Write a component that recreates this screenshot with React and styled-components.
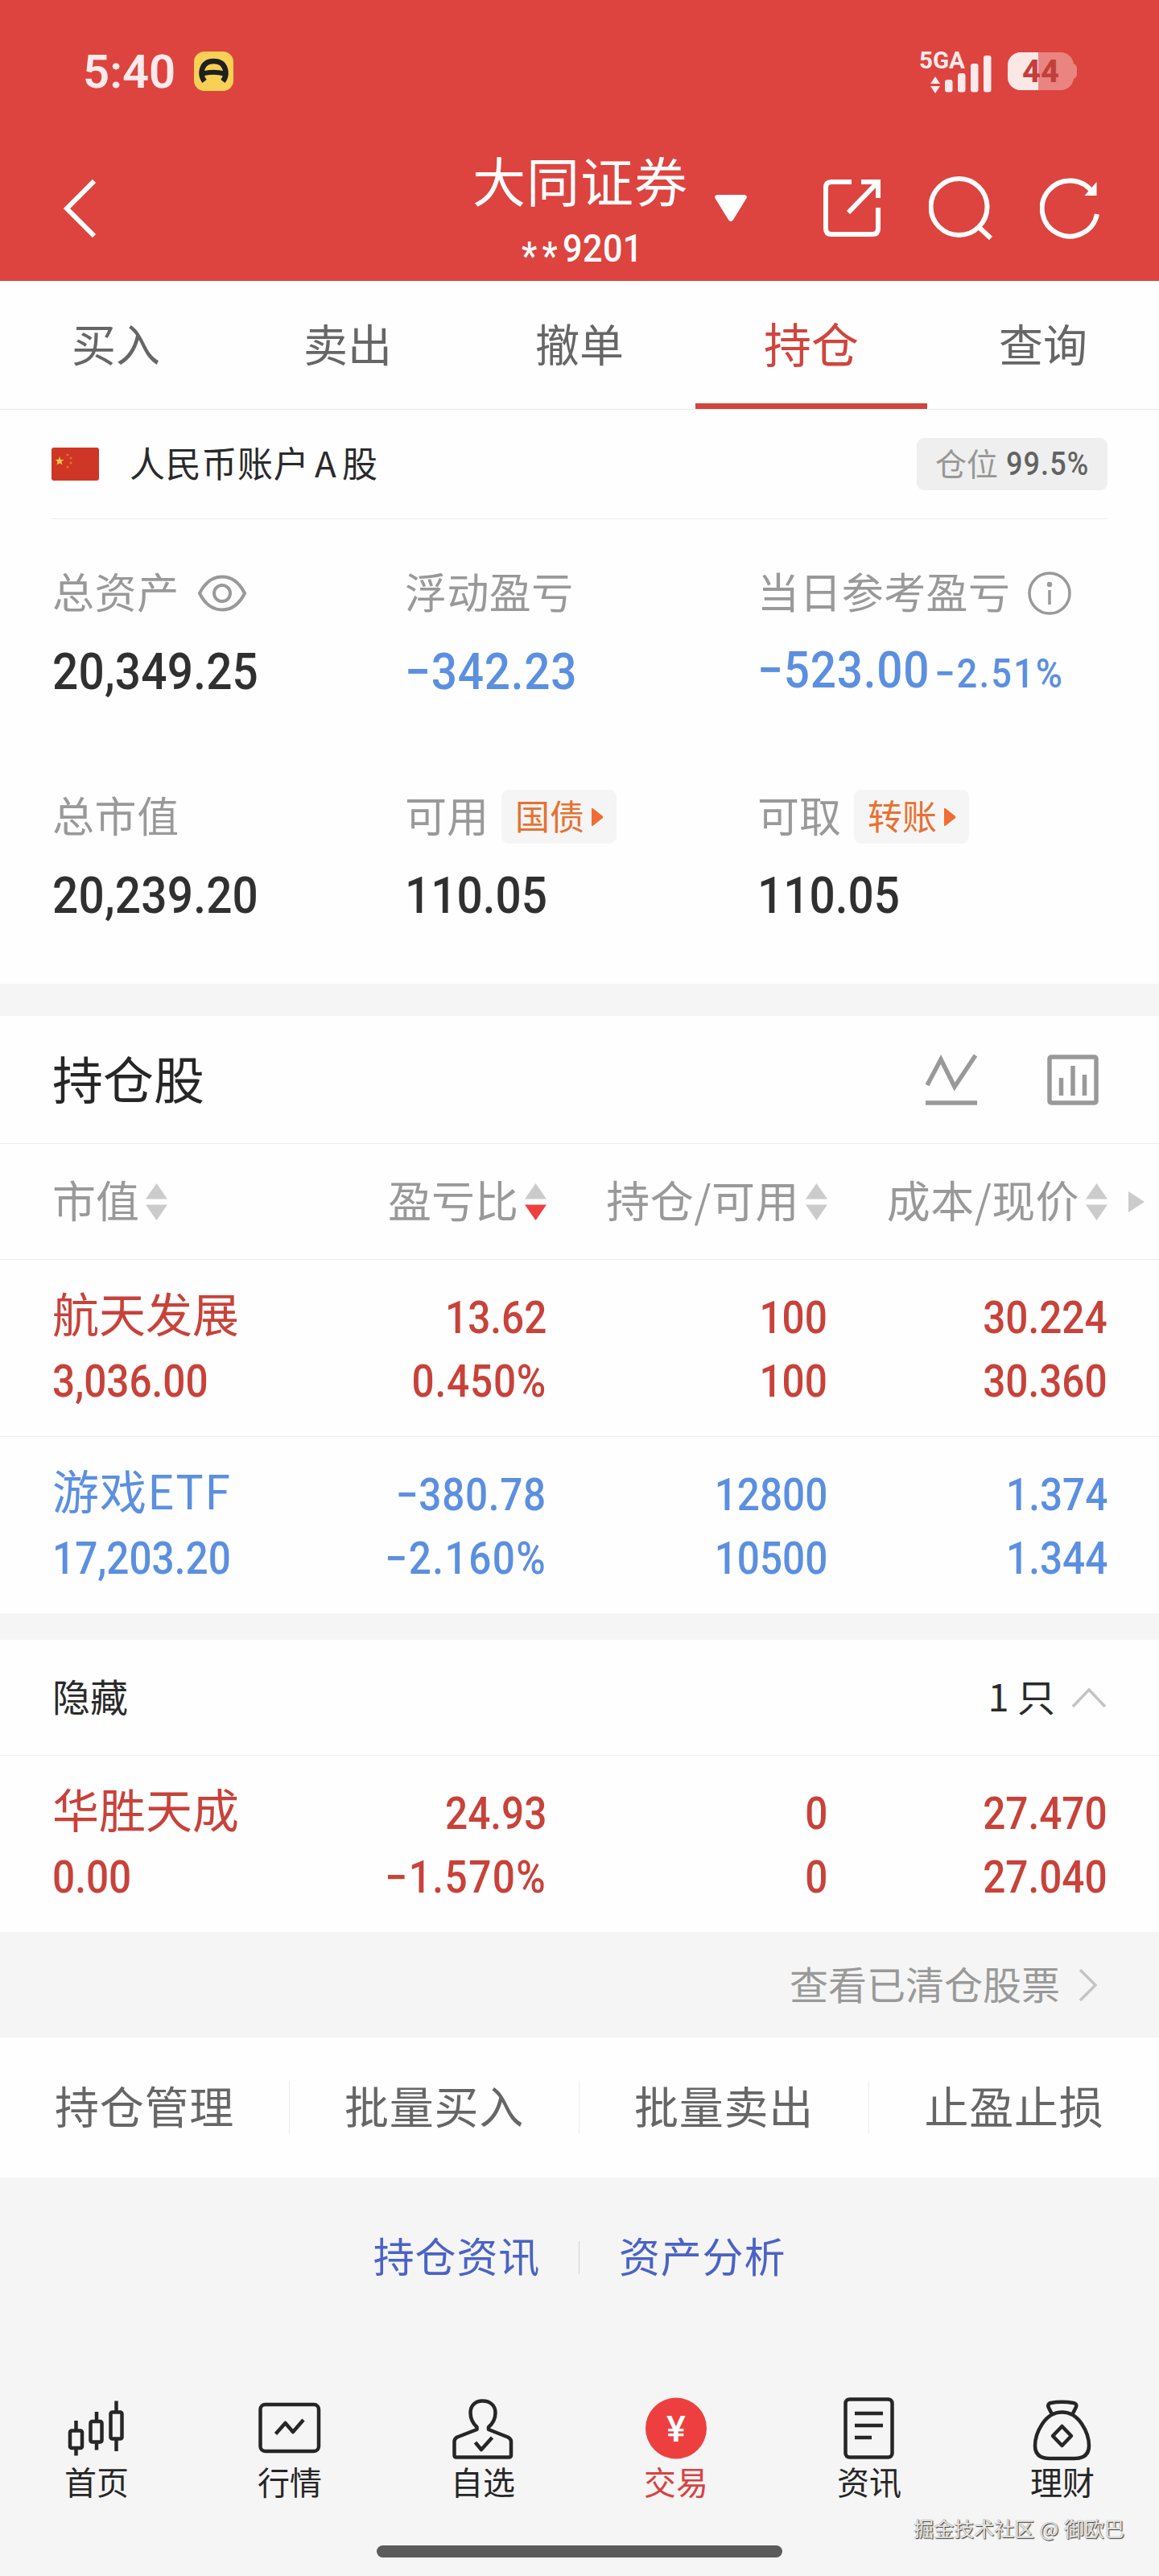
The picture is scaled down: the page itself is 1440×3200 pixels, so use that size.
import React from "react";
import styled, { createGlobalStyle } from "styled-components";

const RED = "#c8423a";
const BLUE = "#5b8fe0";

const GlobalStyle = createGlobalStyle`
  * { box-sizing: border-box; }
  body {
    margin: 0;
    background: #f5f5f5;
    font-family: "Noto Sans CJK SC", sans-serif;
  }
  svg { display: block; flex: none; }
`;

const Page = styled.div`
  width: 1440px;
  height: 3200px;
  overflow: hidden;
  background: #f5f5f5;
`;

// the bottom padding centres the ideographs in their own box
const Text = styled.span`
  font-size: ${(p) => p.$size}px;
  line-height: 1;
  padding-bottom: 0.11em;
  letter-spacing: ${(p) => p.$space || 0}px;
  color: ${(p) => p.$color || "#2a2a2a"};
  white-space: nowrap;
`;
const Num = styled.span`
  display: inline-block;
  font-family: Roboto, sans-serif;
  font-size: ${(p) => p.$size}px;
  font-weight: 500;
  line-height: 1;
  letter-spacing: ${(p) => p.$space || 0}em;
  color: ${(p) => p.$color || "#303030"};
  white-space: nowrap;
  transform: scaleX(0.9);
  transform-origin: ${(p) => p.$origin || "left"} center;
`;

const Header = styled.header`
  height: 349px;
  background: #dd443f;
`;
const StatusBar = styled.div`
  height: 177px;
  padding: 0 102px 0 103px;
  display: flex;
  align-items: center;
`;
const Clock = styled.span`
  font: 600 58px/1 Roboto, sans-serif;
  color: #fdeaea;
`;
const AppBadge = styled.svg`
  margin-left: 23px;
`;
const Signal = styled.svg`
  margin-left: auto;
  margin-right: 20px;
`;
const TitleBar = styled.div`
  height: 172px;
  display: grid;
  grid-template-columns: 586px 270px 166px 1fr;
`;
const Back = styled.svg`
  margin: 46px 0 0 78px;
`;
const TitleBlock = styled.div`
  display: flex;
  flex-direction: column;
  align-items: center;
  padding-top: 12px;
`;
const Account = styled.div`
  margin-top: 23px;
  width: 147px;
  display: flex;
`;
const Stars = styled.span`
  line-height: 0;
  vertical-align: -9px;
  letter-spacing: 7px;
`;
const Caret = styled.svg`
  margin: 65px 0 0 32px;
`;
const HeaderIcons = styled.div`
  display: flex;
  gap: 56px;
  padding-top: 40px;
`;

const Tabs = styled.nav`
  height: 160px;
  display: grid;
  grid-template-columns: repeat(5, 1fr);
  background: #fefefe;
  border-bottom: 1px solid #ebebeb;
`;
const Tab = styled.div`
  display: flex;
  justify-content: center;
  align-items: center;
  border-bottom: 7px solid ${(p) => (p.$active ? "#d0453d" : "transparent")};
  padding-top: 7px;
`;

const Panel = styled.section`
  background: #fefefe;
  margin-bottom: ${(p) => p.$gap || 0}px;
`;
const AccountRow = styled.div`
  height: 136px;
  margin: 0 64px;
  border-bottom: 1px solid #ebebeb;
  display: flex;
  align-items: center;
`;
const AccountName = styled.div`
  margin-left: 38px;
  display: flex;
  word-spacing: -4px;
`;
const Position = styled.div`
  margin-left: auto;
  width: 237px;
  height: 65px;
  border-radius: 9px;
  background: #efefef;
  padding-left: 23px;
  display: flex;
  align-items: center;
  gap: 10px;
`;
const Summary = styled.div`
  height: 577px;
  padding: 43px 0 0 65px;
  display: grid;
  grid-template-columns: 438px 438px 1fr;
  grid-template-rows: 278px 1fr;
`;
const Metric = styled.div``;
const MetricLabel = styled.div`
  height: 97px;
  display: flex;
  align-items: center;
`;
const MetricValue = styled.div`
  height: 97px;
  padding-top: 2px;
  display: flex;
  align-items: center;
`;
const MetricIcon = styled.svg`
  margin-left: 22px;
`;
const DayProfit = styled(MetricValue)`
  height: 90px;
  align-items: baseline;
  padding-top: 16px;
`;
const Tag = styled.div`
  height: 67px;
  width: 143px;
  margin-left: ${(p) => p.$left}px;
  padding-left: 17px;
  border-radius: 9px;
  background: #f5f5f5;
  display: flex;
  align-items: center;
  gap: 8px;
`;

const SectionHead = styled.div`
  height: 159px;
  padding: 0 75px 0 65px;
  border-bottom: 1px solid #ebebeb;
  display: flex;
  align-items: center;
`;
const HeadIcons = styled.div`
  margin-left: auto;
  padding-top: 1px;
  display: flex;
  gap: 86px;
`;
const columns = "266px 348px 349px 348px 1fr";
const ColumnHead = styled.div`
  height: 144px;
  padding: 1px 0 0 65px;
  border-bottom: 1px solid #ededed;
  display: grid;
  grid-template-columns: ${columns};
  align-items: center;
`;
const ColumnLabel = styled.div`
  display: flex;
  align-items: center;
  justify-content: ${(p) => (p.$first ? "flex-start" : "flex-end")};
`;
const Sorter = styled.svg`
  margin-left: 8px;
`;
const More = styled.svg`
  margin-left: 26px;
`;
const StockRow = styled.div`
  height: ${(p) => (p.$last ? 219 : 220)}px;
  padding: 33px 0 0 65px;
  border-bottom: ${(p) => (p.$last ? "none" : "1px solid #ededed")};
  display: grid;
  grid-template-columns: ${columns};
  align-items: start;
`;
const Cell = styled.div`
  display: grid;
  grid-auto-rows: 79px;
  align-items: center;
  justify-items: ${(p) => (p.$first ? "start" : "end")};
`;
const StockName = styled(Text)`
  margin-top: -9px;
`;

const FoldRow = styled.div`
  height: 144px;
  padding: 0 65px;
  border-bottom: 1px solid #ededed;
  display: flex;
  align-items: center;
`;
const FoldCount = styled.div`
  margin-left: auto;
  display: flex;
  align-items: center;
`;
const FoldIcon = styled.svg`
  margin-left: 20px;
`;
const ClearedLink = styled.div`
  height: 131px;
  padding-right: 75px;
  display: flex;
  align-items: center;
  justify-content: flex-end;
  gap: 22px;
`;
const Actions = styled.div`
  height: 174px;
  background: #fefefe;
  display: grid;
  grid-template-columns: repeat(4, 1fr);
  align-items: center;
`;
const Action = styled.div`
  height: 66px;
  display: flex;
  align-items: center;
  justify-content: center;
  border-right: 1px solid #ececec;
  &:last-child {
    border-right: none;
  }
`;
const Links = styled.div`
  height: 199px;
  display: flex;
  align-items: center;
  justify-content: center;
`;
const LinkDivider = styled.div`
  width: 1px;
  height: 41px;
  margin: 0 49px 0 48px;
  background: #d2d2d2;
`;
const BottomNav = styled.nav`
  height: 207px;
  padding-top: 70px;
  display: grid;
  grid-template-columns: repeat(6, 1fr);
`;
const NavItem = styled.div`
  display: flex;
  flex-direction: column;
  align-items: center;
  gap: 4px;
`;
const Watermark = styled.div`
  height: 51px;
  padding: 17px 43px 0 0;
  font-size: 25px;
  line-height: 1;
  text-align: right;
  word-spacing: 1px;
  color: #e6e6e6;
  text-shadow: 1px 1px 1px #333, 0 0 1px #777;
`;
const HomeBar = styled.div`
  width: 504px;
  height: 15px;
  margin: 0 auto;
  border-radius: 8px;
  background: #5b5b5b;
`;

const SortIcon = ({ down }) => (
  <Sorter width="27" height="46" viewBox="0 0 27 46">
    <path d="M13.5 0L27 19.5H0z" fill="#cbcbcb" />
    <path d="M0 26.5H27L13.5 46z" fill={down ? "#ee3f40" : "#cbcbcb"} />
  </Sorter>
);

const TagArrow = () => (
  <svg width="16" height="24" viewBox="0 0 16 24">
    <path d="M1 2Q1 0 3 1.5L14.5 10.5Q16 12 14.5 13.5L3 22.5Q1 24 1 22z" fill="#ef6d31" />
  </svg>
);

// signs and percents need a little more air than plain digits
const Amount = ({ size = 55, children, ...rest }) => (
  <Num
    $size={size}
    $space={(children.includes("−") ? 0.014 : 0) + (children.includes("%") ? 0.016 : 0)}
    {...rest}
  >
    {children}
  </Num>
);

const stocks = [
  {
    name: "航天发展",
    value: "3,036.00",
    color: RED,
    cells: [["13.62", "0.450%"], ["100", "100"], ["30.224", "30.360"]],
  },
  {
    name: "游戏ETF",
    space: 1,
    value: "17,203.20",
    color: BLUE,
    cells: [["−380.78", "−2.160%"], ["12800", "10500"], ["1.374", "1.344"]],
  },
];

const hidden = {
  name: "华胜天成",
  value: "0.00",
  color: RED,
  cells: [["24.93", "−1.570%"], ["0", "0"], ["27.470", "27.040"]],
};

const Stock = ({ stock, last }) => (
  <StockRow $last={last}>
    <Cell $first>
      <StockName $size={58} $space={stock.space} $color={stock.color}>{stock.name}</StockName>
      <Amount $color={stock.color}>{stock.value}</Amount>
    </Cell>
    {stock.cells.map(([top, bottom], i) => (
      <Cell key={`${stock.name}-${i}`}>
        <Amount $origin="right" $color={stock.color}>{top}</Amount>
        <Amount $origin="right" $color={stock.color}>{bottom}</Amount>
      </Cell>
    ))}
  </StockRow>
);

// 80x84 drawings of the bottom navigation
const navItems = [
  {
    label: "首页",
    icon: (
      <>
        <rect x="7" y="45.5" width="15" height="21.5" rx="2" />
        <path d="M14.5 33v12M14.5 67v9.5M40 22v12M40 60v9.5M64.5 8.5v13M64.5 57v14" />
        <rect x="32.5" y="34" width="14" height="25.5" rx="2" />
        <rect x="57.5" y="22.5" width="14" height="33" rx="2" />
      </>
    ),
  },
  {
    label: "行情",
    icon: (
      <>
        <rect x="3.5" y="13" width="72.5" height="58" rx="6" />
        <path d="M22.5 49.5L34.5 36L44 47L57 32" />
      </>
    ),
  },
  {
    label: "自选",
    icon: (
      <>
        <path d="M32.5 44V41C27 36 24.5 30 24.5 23C24.5 14 31 8.5 39.5 8.5C48.5 8.5 55.5 14 55.5 23C55.5 30 53 36 47 41V44L71 53.5Q75 55.5 75 59V76Q75 78.5 72 78.5H7Q4.5 78.5 4.5 76V59Q4.5 55.5 8 53.5Z" />
        <path d="M30.5 60L38 69L51.5 54" />
      </>
    ),
  },
  {
    label: "交易",
    active: true,
    icon: (
      <>
        <circle cx="40" cy="42.5" r="38" fill="#ee3f40" stroke="none" />
        <text x="40" y="59" textAnchor="middle" fontFamily="Roboto, sans-serif" fontSize="45" fontWeight="500" fill="#fff" stroke="none">¥</text>
      </>
    ),
  },
  {
    label: "资讯",
    icon: (
      <>
        <rect x="10.5" y="6.5" width="58" height="72" rx="5" />
        <path d="M22 24H57M22 39H57M22 54H43" />
      </>
    ),
  },
  {
    label: "理财",
    icon: (
      <>
        <path d="M27 25L22.5 16Q21.5 12 25.5 11Q39 8.5 53.5 11Q58.5 12 57 16L52.5 25" />
        <path d="M39.5 22.5C51 22.5 58 28 64 37C70 46 73 56 73 64C73 76 65 80 55 80H24C14 80 6 76 6 64C6 56 9 46 15 37C21 28 28 22.5 39.5 22.5Z" />
        <path d="M39.5 40L51 52L39.5 64L28 52Z" />
      </>
    ),
  },
];

const TopHeader = () => (
  <Header>
    <StatusBar>
      <Clock>5:40</Clock>
      <AppBadge width="49" height="49" viewBox="0 0 49 49">
        <rect width="49" height="49" rx="13" fill="#f8d055" />
        <path d="M13 37C7 29 8 12 24.5 12C41 12 42 29 36 37" fill="none" stroke="#1d211f" strokeWidth="6.5" />
        <path d="M11 27.5Q24.5 24 38 27.5" fill="none" stroke="#1d211f" strokeWidth="6" />
      </AppBadge>
      <Signal width="96" height="82" viewBox="-4 -14 96 82">
        <text x="2" y="23" fontFamily="Roboto, sans-serif" fontSize="30" fontWeight="700" fill="#fdeaea" textLength="57" lengthAdjust="spacingAndGlyphs">5GA</text>
        <g fill="#fdeaea">
          <path d="M16 42L22 33L28 42zM16 45H28L22 54z" />
          <rect x="34" y="37" width="9.5" height="15.5" rx="3" />
          <rect x="50" y="29" width="9.5" height="23.5" rx="3" />
          <rect x="66" y="17" width="9.5" height="35.5" rx="3" />
          <rect x="82" y="7" width="9.5" height="45.5" rx="3" />
        </g>
      </Signal>
      <svg width="86" height="47" viewBox="0 0 86 47">
        <rect width="82" height="47" rx="16" fill="#ea8480" />
        <path d="M81 14Q86 15 86 20V27Q86 32 81 33z" fill="#ea8480" />
        <path d="M38 0H16A16 16 0 0 0 0 16V31A16 16 0 0 0 16 47H38z" fill="#fbe8e6" />
        <text x="18" y="37" fontFamily="Roboto, sans-serif" fontSize="38" fontWeight="800" fill="#c23f3b" textLength="46" lengthAdjust="spacingAndGlyphs">44</text>
      </svg>
    </StatusBar>
    <TitleBar>
      <Back width="44" height="72" viewBox="0 0 44 72" fill="none" stroke="#fff" strokeWidth="6">
        <path d="M39 2L5 36L39 70" />
      </Back>
      <TitleBlock>
        <Text $size={66} $space={1} $color="#fff">大同证券</Text>
        <Account>
          <Num $size={48} $space={0.01} $color="#fff">
            <Stars>**</Stars>9201
          </Num>
        </Account>
      </TitleBlock>
      <Caret width="40" height="34" viewBox="0 0 40 34">
        <path d="M3 0H37Q41.5 1 39 5L23 31Q20 35 17 31L1 5Q-1.5 1 3 0z" fill="#fff" />
      </Caret>
      <HeaderIcons>
        <svg width="76" height="82" viewBox="0 0 76 82" fill="none" stroke="#fff" strokeWidth="6">
          <path d="M36 9H11Q4 9 4 16V67Q4 74 11 74H62Q69 74 69 67V41" />
          <path d="M48 9H69V29M68 10L32 47" />
        </svg>
        <svg width="82" height="82" viewBox="0 0 82 82" fill="none" stroke="#fff" strokeWidth="6">
          <circle cx="37.5" cy="40" r="35" />
          <path d="M62 65L77 79" />
        </svg>
        <svg width="76" height="82" viewBox="0 0 76 82" fill="none" stroke="#fff" strokeWidth="6">
          <path d="M66 23A34.5 34.5 0 1 0 71 49" />
          <path d="M70.5 9V26H55.5z" fill="#fff" stroke="none" />
        </svg>
      </HeaderIcons>
    </TitleBar>
  </Header>
);

const AccountPanel = () => (
  <Panel $gap={40}>
    <AccountRow>
      <svg width="59" height="41" viewBox="0 0 59 41">
        <rect width="59" height="41" rx="3" fill="#cf3625" />
        <path d="M10 11l1.5 4h4l-3.2 2.6 1.2 4-3.5-2.4-3.5 2.4 1.2-4L4.5 15h4z" fill="#f6c945" />
        <g fill="#e2702c">
          <circle cx="20" cy="9" r="1.6" />
          <circle cx="24" cy="13" r="1.6" />
          <circle cx="24" cy="19" r="1.6" />
          <circle cx="20" cy="24" r="1.6" />
        </g>
      </svg>
      <AccountName>
        <Text $size={44} $space={0.7}>人民币账户 A 股</Text>
      </AccountName>
      <Position>
        <Text $size={39} $color="#979797">仓位</Text>
        <Num $size={40} $space={0.03} $color="#636363">99.5%</Num>
      </Position>
    </AccountRow>
    <Summary>
      <Metric>
        <MetricLabel>
          <Text $size={52} $space={0.6} $color="#999">总资产</Text>
          <MetricIcon width="62" height="46" viewBox="0 0 62 46" fill="none" stroke="#999" strokeWidth="4">
            <path d="M3 23C10 9 20 2.5 31 2.5S52 9 59 23C52 37 42 43.5 31 43.5S10 37 3 23Z" />
            <circle cx="31" cy="23" r="10" />
          </MetricIcon>
        </MetricLabel>
        <MetricValue><Amount size={63} $space={0.004}>20,349.25</Amount></MetricValue>
      </Metric>
      <Metric>
        <MetricLabel><Text $size={52} $space={0.4} $color="#999">浮动盈亏</Text></MetricLabel>
        <MetricValue><Amount size={63} $color={BLUE}>−342.23</Amount></MetricValue>
      </Metric>
      <Metric>
        <MetricLabel>
          <Text $size={52} $space={0.4} $color="#999">当日参考盈亏</Text>
          <MetricIcon width="54" height="54" viewBox="0 0 54 54" fill="none" stroke="#999" strokeWidth="3.5">
            <circle cx="27" cy="27" r="25" />
            <path d="M27 23V41" />
            <circle cx="27" cy="16" r="1.5" />
          </MetricIcon>
        </MetricLabel>
        <DayProfit>
          <Amount size={63} $color={BLUE}>−523.00</Amount>
          <Num $size={50} $space={0.05} $color={BLUE} $origin="-180px">−2.51%</Num>
        </DayProfit>
      </Metric>
      <Metric>
        <MetricLabel><Text $size={52} $space={0.6} $color="#999">总市值</Text></MetricLabel>
        <MetricValue><Amount size={63} $space={0.004}>20,239.20</Amount></MetricValue>
      </Metric>
      <Metric>
        <MetricLabel>
          <Text $size={52} $color="#999">可用</Text>
          <Tag $left={16}>
            <Text $size={43} $color="#e9702f">国债</Text>
            <TagArrow />
          </Tag>
        </MetricLabel>
        <MetricValue><Amount size={63}>110.05</Amount></MetricValue>
      </Metric>
      <Metric>
        <MetricLabel>
          <Text $size={52} $color="#999">可取</Text>
          <Tag $left={16}>
            <Text $size={43} $color="#e9702f">转账</Text>
            <TagArrow />
          </Tag>
        </MetricLabel>
        <MetricValue><Amount size={63}>110.05</Amount></MetricValue>
      </Metric>
    </Summary>
  </Panel>
);

const HoldingsPanel = () => (
  <Panel $gap={33}>
    <SectionHead>
      <Text $size={63} $color="#262626">持仓股</Text>
      <HeadIcons>
        <svg width="66" height="66" viewBox="0 0 66 66" fill="none" stroke="#999" strokeWidth="5.5">
          <path d="M3 39L20 7L37 41L63 2" />
          <path d="M1 61H65" />
        </svg>
        <svg width="64" height="66" viewBox="0 0 64 66" fill="none" stroke="#999" strokeWidth="5.5">
          <rect x="3" y="4" width="58" height="57" rx="2" />
          <path d="M17.5 30V52M32 15V52M46.5 26V52" />
        </svg>
      </HeadIcons>
    </SectionHead>
    <ColumnHead>
      <ColumnLabel $first>
        <Text $size={54} $color="#999">市值</Text>
        <SortIcon />
      </ColumnLabel>
      <ColumnLabel>
        <Text $size={54} $color="#999">盈亏比</Text>
        <SortIcon down />
      </ColumnLabel>
      <ColumnLabel>
        <Text $size={54} $space={0.5} $color="#999">持仓/可用</Text>
        <SortIcon />
      </ColumnLabel>
      <ColumnLabel>
        <Text $size={54} $space={0.4} $color="#999">成本/现价</Text>
        <SortIcon />
      </ColumnLabel>
      <More width="20" height="26" viewBox="0 0 20 26">
        <path d="M0 0L20 13L0 26z" fill="#cbcbcb" />
      </More>
    </ColumnHead>
    {stocks.map((stock, i) => (
      <Stock key={stock.name} stock={stock} last={i === stocks.length - 1} />
    ))}
  </Panel>
);

const HiddenPanel = () => (
  <Panel>
    <FoldRow>
      <Text $size={47}>隐藏</Text>
      <FoldCount>
        <Text $size={47}>1 只</Text>
        <FoldIcon width="44" height="26" viewBox="0 0 44 26" fill="none" stroke="#c4c4c4" strokeWidth="3.5">
          <path d="M2 24L22 3L42 24" />
        </FoldIcon>
      </FoldCount>
    </FoldRow>
    <Stock stock={hidden} last />
  </Panel>
);

const App = () => (
  <>
    <GlobalStyle />
    <Page>
      <TopHeader />
      <Tabs>
        {["买入", "卖出", "撤单", "持仓", "查询"].map((tab) => {
          const active = tab === "持仓";
          return (
            <Tab key={tab} $active={active}>
              <Text $size={active ? 59 : 55} $color={active ? "#d0453d" : "#666"}>{tab}</Text>
            </Tab>
          );
        })}
      </Tabs>
      <AccountPanel />
      <HoldingsPanel />
      <HiddenPanel />
      <ClearedLink>
        <Text $size={48} $color="#999">查看已清仓股票</Text>
        <svg width="26" height="42" viewBox="0 0 26 42" fill="none" stroke="#c4c4c4" strokeWidth="3.5">
          <path d="M3 2L22 21L3 40" />
        </svg>
      </ClearedLink>
      <Actions>
        {["持仓管理", "批量买入", "批量卖出", "止盈止损"].map((action) => (
          <Action key={action}>
            <Text $size={55} $space={0.8} $color="#666">{action}</Text>
          </Action>
        ))}
      </Actions>
      <Links>
        <Text $size={51} $space={0.8} $color="#4b63c6">持仓资讯</Text>
        <LinkDivider />
        <Text $size={51} $space={0.8} $color="#4b63c6">资产分析</Text>
      </Links>
      <BottomNav>
        {navItems.map(({ label, icon, active }) => (
          <NavItem key={label}>
            <svg width="80" height="84" viewBox="0 0 80 84" fill="none" stroke="#262626" strokeWidth="4.5" strokeLinejoin="round">
              {icon}
            </svg>
            <Text $size={40} $color={active ? "#d8413f" : "#262626"}>{label}</Text>
          </NavItem>
        ))}
      </BottomNav>
      <Watermark>掘金技术社区 @ 御欧巴</Watermark>
      <HomeBar />
    </Page>
  </>
);

export default App;
